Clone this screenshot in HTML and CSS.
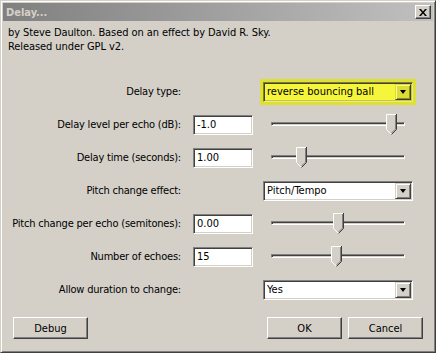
FILE: index.html
```html
<!DOCTYPE html>
<html lang="en">
<head>
  <meta charset="UTF-8" />
  <title>Delay...</title>
  <link rel="stylesheet" href="styles.css">
</head>
<body>

  <div class="window">
    <div class="titlebar">
      <span class="title">Delay...</span>
      <button class="close" title="Close">
        <svg width="8" height="7" viewBox="0 0 8 7">
          <path d="M0 0h2l2 2.5L6 0h2L5 3.5 8 7H6L4 4.5 2 7H0l3-3.5z" fill="#000" />
        </svg>
      </button>
    </div>

    <div class="content">
      <p class="about">
        by Steve Daulton. Based on an effect by David R. Sky.<br>
        Released under GPL v2.
      </p>

      <div class="controls">
        <div class="row">
          <label class="label">Delay type:</label>
          <div class="select focused">
            <span class="select-text">reverse bouncing ball</span>
            <span class="arrow"></span>
          </div>
        </div>

        <div class="row">
          <label class="label">Delay level per echo (dB):</label>
          <input class="field" type="text" value="-1.0" />
          <div class="slider">
            <div class="track"></div>
            <span class="thumb" style="left: 115px"></span>
          </div>
        </div>

        <div class="row">
          <label class="label">Delay time (seconds):</label>
          <input class="field" type="text" value="1.00" />
          <div class="slider">
            <div class="track"></div>
            <span class="thumb" style="left: 25px"></span>
          </div>
        </div>

        <div class="row">
          <label class="label">Pitch change effect:</label>
          <div class="select">
            <span class="select-text">Pitch/Tempo</span>
            <span class="arrow"></span>
          </div>
        </div>

        <div class="row">
          <label class="label">Pitch change per echo (semitones):</label>
          <input class="field" type="text" value="0.00" />
          <div class="slider">
            <div class="track"></div>
            <span class="thumb" style="left: 62px"></span>
          </div>
        </div>

        <div class="row">
          <label class="label">Number of echoes:</label>
          <input class="field" type="text" value="15" />
          <div class="slider">
            <div class="track"></div>
            <span class="thumb" style="left: 60px"></span>
          </div>
        </div>

        <div class="row">
          <label class="label">Allow duration to change:</label>
          <div class="select">
            <span class="select-text">Yes</span>
            <span class="arrow"></span>
          </div>
        </div>
      </div>

      <div class="buttons">
        <button class="btn">Debug</button>
        <span class="spacer"></span>
        <button class="btn">OK</button>
        <button class="btn">Cancel</button>
      </div>
    </div>
  </div>

</body>
</html>
```

FILE: styles.css
```css
body {
  margin: 0;
  padding: 0;
  background: #d4d0c8;
  font-family: "DejaVu Sans Condensed", "DejaVu Sans", sans-serif;
  font-stretch: condensed;
  font-size: 11px;
  color: #000;
  overflow: hidden;
}

.window {
  width: 436px;
  height: 353px;
  box-sizing: border-box;
  background: #d4d0c8;
  border: 1px solid;
  border-color: #d4d0c8 #404040 #404040 #d4d0c8;
  box-shadow: inset 1px 1px 0 #fff, inset -1px -1px 0 #808080;
  padding: 2px;
}

.titlebar {
  display: flex;
  align-items: center;
  height: 18px;
  padding: 0 2px 0 3px;
  background: linear-gradient(to right, #808080, #c0c0c0);
}

.title {
  flex: 1;
  color: #d4d0c8;
  font-weight: bold;
}

.close {
  width: 16px;
  height: 14px;
  padding: 0;
  display: flex;
  align-items: center;
  justify-content: center;
  background: #d4d0c8;
  border: 1px solid;
  border-color: #fff #404040 #404040 #fff;
  box-shadow: inset -1px -1px 0 #808080;
}

.about {
  margin: 5px 0 0;
  padding-left: 5px;
  line-height: 14px;
  letter-spacing: -0.08px;
}

.controls {
  margin-top: 21px;
}

.row {
  display: grid;
  grid-template-columns: 178px 82px 150px;
  align-items: center;
  height: 33px;
}

.label {
  grid-column: 1;
  text-align: right;
  white-space: nowrap;
  letter-spacing: -0.2px;
}

.field {
  grid-column: 2;
  margin-left: 12px;
  width: 60px;
  height: 20px;
  box-sizing: border-box;
  padding: 0 3px;
  font: inherit;
  color: #000;
  background: #fff;
  border: 1px solid;
  border-color: #808080 #fff #fff #808080;
  box-shadow: inset 1px 1px 0 #404040, inset -1px -1px 0 #d4d0c8;
  outline: none;
}

.slider {
  grid-column: 3;
  position: relative;
  margin-left: 8px;
  width: 134px;
  height: 22px;
}

.track {
  margin-top: 8px;
  height: 4px;
  box-sizing: border-box;
  border: 1px solid;
  border-color: #808080 #fff #fff #808080;
  box-shadow: inset 1px 1px 0 #404040;
}

.thumb {
  position: absolute;
  top: 0;
  width: 11px;
  height: 21px;
  background: url("data:image/svg+xml,%3Csvg xmlns='http://www.w3.org/2000/svg' width='11' height='21'%3E%3Cpath d='M0 0H11V15.5L5.5 21L0 15.5Z' fill='%23d4d0c8'/%3E%3Cpath d='M0.5 15.5V0.5H10' fill='none' stroke='%23fff'/%3E%3Cpath d='M0.5 15.5L5.5 20.5' fill='none' stroke='%23fff'/%3E%3Cpath d='M10.5 0V15.5L5.5 20.5' fill='none' stroke='%23404040'/%3E%3Cpath d='M9.5 1V15L5.5 19' fill='none' stroke='%23808080'/%3E%3C/svg%3E") no-repeat;
}

.select {
  grid-column: 3;
  display: flex;
  align-items: center;
  width: 150px;
  height: 20px;
  box-sizing: border-box;
  background: #fff;
  border: 1px solid;
  border-color: #808080 #fff #fff #808080;
  box-shadow: inset 1px 1px 0 #404040, inset -1px -1px 0 #d4d0c8;
  padding: 1px 1px 1px 3px;
}

.select-text {
  flex: 1;
  white-space: nowrap;
}

.arrow {
  width: 16px;
  height: 16px;
  box-sizing: border-box;
  background: #d4d0c8;
  border: 1px solid;
  border-color: #d4d0c8 #404040 #404040 #d4d0c8;
  box-shadow: inset 1px 1px 0 #fff, inset -1px -1px 0 #808080;
  display: flex;
  align-items: center;
  justify-content: center;
}

.arrow::after {
  content: "";
  border-left: 3.5px solid transparent;
  border-right: 3.5px solid transparent;
  border-top: 4px solid #000;
}

.select.focused {
  background: #f5f53c;
  box-shadow: 0 0 0 3px #e0e030, inset 1px 1px 0 #404040, inset -1px -1px 0 #c8c830;
  border-color: #808028 #e8e8a0 #e8e8a0 #808028;
}

.select.focused .arrow {
  background: #dcdc34;
  border-color: #dcdc34 #404010 #404010 #dcdc34;
  box-shadow: inset 1px 1px 0 #f8f8a0, inset -1px -1px 0 #8c8c20;
}

.buttons {
  display: flex;
  gap: 6px;
  margin-top: 11px;
  padding: 0 10px;
}

.spacer {
  flex: 1;
}

.btn {
  width: 75px;
  height: 22px;
  padding: 0;
  font: inherit;
  color: #000;
  background: #d4d0c8;
  border: 1px solid;
  border-color: #fff #404040 #404040 #fff;
  box-shadow: inset -1px -1px 0 #808080;
}
```
